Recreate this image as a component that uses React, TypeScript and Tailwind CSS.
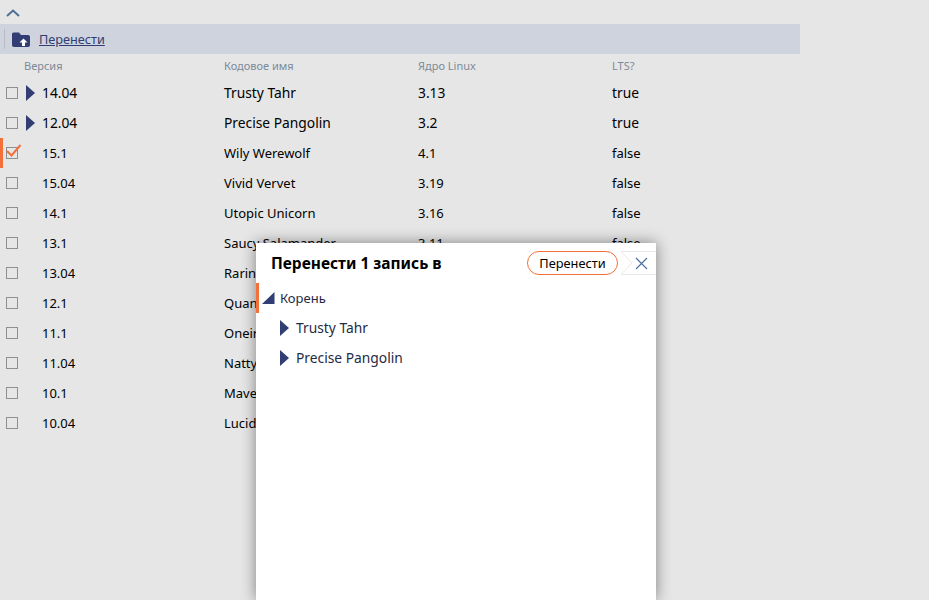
import React from "react";

const font = { fontFamily: '"Noto Sans", sans-serif' };

type Row = { v: string; n: string; k: string; l: string; parent?: boolean; checked?: boolean };
const rows: Row[] = [
  { v: "14.04", n: "Trusty Tahr", k: "3.13", l: "true", parent: true },
  { v: "12.04", n: "Precise Pangolin", k: "3.2", l: "true", parent: true },
  { v: "15.1", n: "Wily Werewolf", k: "4.1", l: "false", checked: true },
  { v: "15.04", n: "Vivid Vervet", k: "3.19", l: "false" },
  { v: "14.1", n: "Utopic Unicorn", k: "3.16", l: "false" },
  { v: "13.1", n: "Saucy Salamander", k: "3.11", l: "false" },
  { v: "13.04", n: "Raring Ringtail", k: "3.8", l: "false" },
  { v: "12.1", n: "Quantal Quetzal", k: "3.5", l: "false" },
  { v: "11.1", n: "Oneiric Ocelot", k: "3.0", l: "false" },
  { v: "11.04", n: "Natty Narwhal", k: "2.6", l: "false" },
  { v: "10.1", n: "Maverick Meerkat", k: "2.6", l: "false" },
  { v: "10.04", n: "Lucid Lynx", k: "2.6", l: "false" },
];

function Tri({ down }: { down?: boolean }) {
  return down ? (
    <svg width="13" height="12" viewBox="0 0 13 12" className="block">
      <polygon points="0,12 12.5,0 12.5,12" fill="#313d73" />
    </svg>
  ) : (
    <svg width="10" height="16" viewBox="0 0 10 16" className="block">
      <polygon points="0,0 9,8 0,16" fill="#313d73" />
    </svg>
  );
}

function Check({ on }: { on?: boolean }) {
  return (
    <div className="relative w-3 h-3 border border-[#8f8f8f] bg-transparent">
      {on && (
        <svg width="16" height="14" viewBox="0 0 16 14" className="absolute left-[-1px] top-[-4px]">
          <path d="M1 7 L5.5 11.5 L14.5 1" fill="none" stroke="#f4703a" strokeWidth="2" />
        </svg>
      )}
    </div>
  );
}

export default function App() {
  return (
    <div className="relative h-[600px] w-[929px] overflow-hidden bg-[#e6e6e6]" style={font}>
      <div className="h-6 pl-[6px] flex items-center">
        <svg width="14" height="8" viewBox="0 0 14 8" className="mt-[2px]">
          <path d="M1 7 L7 1.5 L13 7" fill="none" stroke="#4f7096" strokeWidth="2" />
        </svg>
      </div>

      <div className="flex h-[30px] w-[800px] items-center bg-[#cfd3dd]">
        <div className="ml-1 h-5 w-px bg-[#b9bcc4]" />
        <svg width="18" height="15" viewBox="0 0 18 15" className="ml-[7px]">
          <path d="M1.5 0.5 H7 L9 3 H16 Q18 3 18 5 V13 Q18 15 16 15 H2 Q0 15 0 13 V2 Q0 0.5 1.5 0.5 Z" fill="#313d73" />
          <path d="M11.5 6.5 L15.5 10.5 H13 V14 H10 V10.5 H7.5 Z" fill="#ffffff" />
        </svg>
        <a className="ml-[9px] text-[12.7px] leading-none text-[#313d73] underline">Перенести</a>
      </div>

      <div className="flex h-[24px] items-center text-[11px] text-[#7d8a99]">
        <div className="w-[224px] pl-6">Версия</div>
        <div className="w-[194px]">Кодовое имя</div>
        <div className="w-[194px]">Ядро Linux</div>
        <div>LTS?</div>
      </div>

      {rows.map((r) => (
        <div
          key={r.v}
          className={`relative flex h-[30px] items-center text-black ${r.parent ? "text-[13.8px]" : "text-[13px] pt-[1px]"}`}
        >
          {r.checked && <div className="absolute left-0 top-0 h-[30px] w-[3px] bg-[#f4703a]" />}
          <div className={`flex w-[26px] justify-start pl-[6px] ${r.parent ? "" : "mt-[-1px]"}`}>
            <Check on={r.checked} />
          </div>
          <div className="w-[16px]">{r.parent && <Tri />}</div>
          <div className="w-[182px]">{r.v}</div>
          <div className="w-[194px]">{r.n}</div>
          <div className="w-[194px]">{r.k}</div>
          <div>{r.l}</div>
        </div>
      ))}

      <div className="absolute left-[256px] top-[243px] flex h-[357px] w-[400px] flex-col bg-white shadow-[0_0_14px_rgba(0,0,0,0.45)]">
        <div className="flex h-10 items-center pl-[15px]">
          <div className="pt-[1px] text-[15.5px] font-bold text-black">Перенести 1 запись в</div>
          <div className="ml-auto flex h-6 w-[91px] items-center justify-center rounded-full border border-[#f4703a] pt-[1px] text-[12.8px] text-black">
            Перенести
          </div>
          <div className="relative ml-[3px] flex h-6 w-[35px] items-center justify-end pr-[8px]">
            <svg width="35" height="24" viewBox="0 0 35 24" className="absolute left-0 top-0">
              <path d="M0 0.5 H35 M0 23.5 H35 M0 0.5 L11 12 L0 23.5" fill="none" stroke="#e8e8e8" strokeWidth="1" />
            </svg>
            <svg width="13" height="13" viewBox="0 0 13 13" className="relative">
              <path d="M1 1 L12 12 M12 1 L1 12" fill="none" stroke="#4f6fa8" strokeWidth="1.2" />
            </svg>
          </div>
        </div>

        <div className="relative flex h-[30px] items-center text-[13px] text-[#1f2a44]">
          <div className="absolute left-0 top-0 h-[30px] w-[3px] bg-[#f4703a]" />
          <div className="ml-[6px]">
            <Tri down />
          </div>
          <span className="ml-[5px] pt-[1px]">Корень</span>
        </div>
        <div className="flex h-[30px] items-center pl-[24px] text-[13.8px] text-[#1f2a44]">
          <Tri />
          <span className="ml-[6px]">Trusty Tahr</span>
        </div>
        <div className="flex h-[30px] items-center pl-[24px] text-[13.8px] text-[#1f2a44]">
          <Tri />
          <span className="ml-[6px]">Precise Pangolin</span>
        </div>
      </div>
    </div>
  );
}
